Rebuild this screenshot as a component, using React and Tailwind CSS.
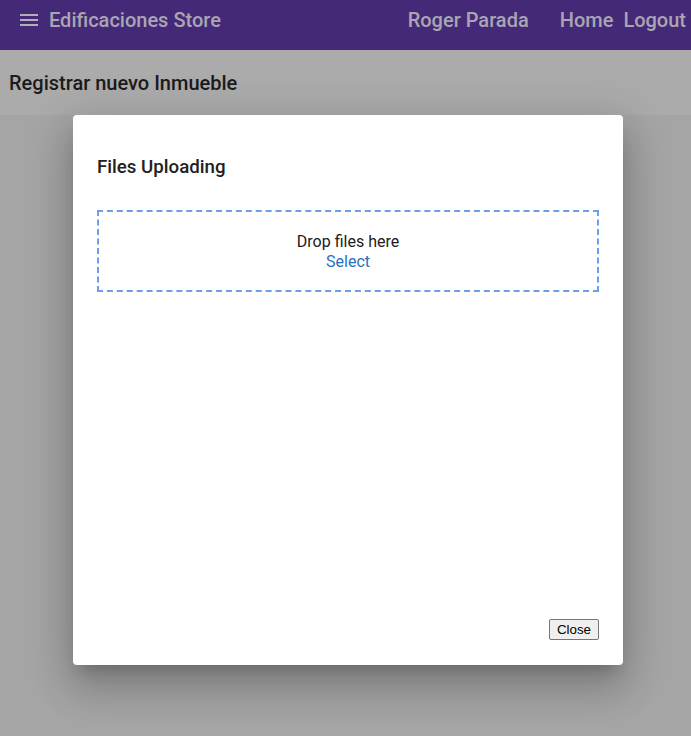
export default function App() {
  return (
    <div
      className="relative min-h-[736px] bg-[#a5a5a5]"
      style={{ fontFamily: 'Roboto, "Liberation Sans", sans-serif' }}
    >
      {/* Navbar (dimmed by the dialog backdrop) */}
      <header className="h-[50px] bg-[#452979] text-[#a9a6b0]">
        <div className="h-[40px] flex items-center pl-[20px] pr-[5px]">
          <svg width="18" height="12" viewBox="0 0 18 12" className="shrink-0">
            <rect x="0" y="0" width="18" height="2" fill="#b2b0b6" />
            <rect x="0" y="5" width="18" height="2" fill="#b2b0b6" />
            <rect x="0" y="10" width="18" height="2" fill="#b2b0b6" />
          </svg>
          <span className="ml-[11px] text-[20px] font-medium">
            Edificaciones Store
          </span>
          <div className="ml-auto flex items-center text-[20px] font-medium">
            <span>Roger Parada</span>
            <span className="ml-[31px]">Home</span>
            <span className="ml-[10px]">Logout</span>
          </div>
        </div>
      </header>

      {/* Sub header */}
      <div className="h-[65px] bg-[#ababab] flex items-center pl-[9px]">
        <h1 className="text-[20px] font-medium text-[#1b1b1b]">
          Registrar nuevo Inmueble
        </h1>
      </div>

      {/* Dialog */}
      <div
        className="absolute left-[73px] top-[115px] w-[550px] h-[550px] bg-white rounded-[4px] flex flex-col px-[24px] pt-[40px] pb-[24px]"
        style={{ boxShadow: '0 11px 15px -7px rgba(0,0,0,.2), 0 24px 38px 3px rgba(0,0,0,.14), 0 9px 46px 8px rgba(0,0,0,.12)' }}
      >
        <h2 className="text-[18.7px] font-medium text-[#212121] leading-[24px]">
          Files Uploading
        </h2>
        <div className="mt-[31px] h-[82px] border-2 border-dashed border-[#6d9eec] flex flex-col items-center justify-center text-[16px] leading-[20px] pt-[2px]">
          <span className="text-[#202020]">Drop files here</span>
          <span className="text-[#2a6fc2]">Select</span>
        </div>
        <div className="mt-auto flex justify-end mb-[1px]">
          <button
            className="h-[21px] px-[7px] text-[13.33px] text-black bg-[#efefef] border border-[#767676] rounded-[2px] leading-none"
            style={{ fontFamily: '"Liberation Sans", Arial, sans-serif' }}
          >
            Close
          </button>
        </div>
      </div>
    </div>
  );
}
